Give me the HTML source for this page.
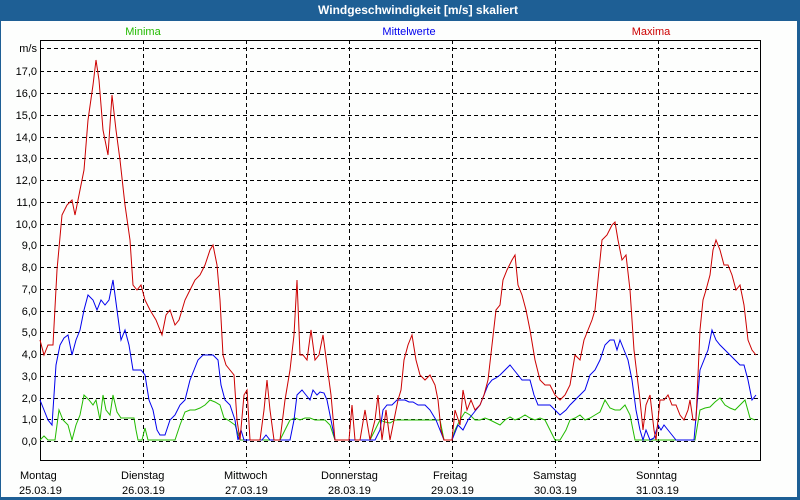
<!DOCTYPE html>
<html><head><meta charset="utf-8"><style>
html,body{margin:0;padding:0;width:800px;height:500px;overflow:hidden;background:#fdfefd}
svg{display:block}
text{font-family:"Liberation Sans",sans-serif;font-size:11px}
</style></head><body>
<svg width="800" height="500" viewBox="0 0 800 500">
<rect x="0" y="0" width="800" height="500" fill="#1e5f95"/>
<rect x="1" y="21" width="796" height="476" fill="#fdfefd"/>
<text x="418" y="14" fill="#fff" font-weight="bold" text-anchor="middle" style="font-size:12px">Windgeschwindigkeit [m/s] skaliert</text>
<text x="143" y="35" fill="#22bb00" text-anchor="middle">Minima</text>
<text x="409" y="35" fill="#0000ee" text-anchor="middle">Mittelwerte</text>
<text x="651" y="35" fill="#cc0000" text-anchor="middle">Maxima</text>
<g stroke="#000" stroke-width="1" stroke-dasharray="4,3" fill="none">
<path d="M40 48.5H760M40 71.5H760M40 93.5H760M40 115.5H760M40 137.5H760M40 158.5H760M40 180.5H760M40 202.5H760M40 224.5H760M40 245.5H760M40 267.5H760M40 289.5H760M40 311.5H760M40 332.5H760M40 354.5H760M40 376.5H760M40 398.5H760M40 419.5H760M40 441.5H760"/>
<path d="M143.5 40V468M246.5 40V468M349.5 40V468M452.5 40V468M555.5 40V468M658.5 40V468"/>
</g>
<rect x="40.5" y="40.5" width="720" height="420" fill="none" stroke="#000"/>
<g text-anchor="end" fill="#000">
<text x="37" y="52">m/s</text>
<text x="37" y="75">17,0</text><text x="37" y="97">16,0</text><text x="37" y="119">15,0</text><text x="37" y="141">14,0</text><text x="37" y="162">13,0</text><text x="37" y="184">12,0</text><text x="37" y="206">11,0</text><text x="37" y="228">10,0</text><text x="37" y="249">9,0</text><text x="37" y="271">8,0</text><text x="37" y="293">7,0</text><text x="37" y="315">6,0</text><text x="37" y="336">5,0</text><text x="37" y="358">4,0</text><text x="37" y="380">3,0</text><text x="37" y="402">2,0</text><text x="37" y="423">1,0</text><text x="37" y="445">0,0</text>
</g>
<g fill="#000">
<text x="20" y="479">Montag</text><text x="19" y="494">25.03.19</text>
<text x="121" y="479">Dienstag</text><text x="122" y="494">26.03.19</text>
<text x="224" y="479">Mittwoch</text><text x="225" y="494">27.03.19</text>
<text x="321" y="479">Donnerstag</text><text x="328" y="494">28.03.19</text>
<text x="433" y="479">Freitag</text><text x="431" y="494">29.03.19</text>
<text x="533" y="479">Samstag</text><text x="534" y="494">30.03.19</text>
<text x="636" y="479">Sonntag</text><text x="636" y="494">31.03.19</text>
</g>
<polyline fill="none" stroke="#22bb00" stroke-width="1" points="40,440 44,436 48,440 55,440 59,410 63,420 68,425 72,440 76,425 80,415 84,395 89,400 93,405 96,400 100,420 103,395 106,410 110,415 113,395 117,412 121,418 125,418 130,418 134,418 136,430 138,440 142,440 145,428 148,440 155,440 165,440 175,440 180,425 185,412 190,410 195,410 200,408 205,405 210,400 215,402 220,405 224,418 228,420 235,425 240,440 280,440 285,430 290,420 295,418 300,420 305,418 310,418 315,420 320,420 325,420 330,425 335,440 370,440 375,430 380,420 385,422 390,423 395,420 400,420 410,420 420,420 430,420 440,420 444,440 452,440 455,430 460,420 465,412 470,415 475,420 480,420 485,418 490,420 500,425 505,420 510,417 515,420 520,418 525,415 530,418 535,420 540,418 545,420 550,430 555,440 560,440 566,430 570,420 575,418 580,415 585,420 590,418 595,415 600,412 605,400 610,408 615,410 620,410 625,405 630,415 635,440 645,440 655,440 665,440 695,440 700,410 705,408 710,407 715,402 720,398 725,405 730,408 735,410 740,405 745,400 750,418 755,420"/>
<polyline fill="none" stroke="#0000ee" stroke-width="1" points="40,400 44,410 48,420 52,425 56,365 60,345 64,338 68,335 72,355 76,340 80,330 84,310 88,295 93,300 97,310 101,300 105,305 109,300 113,280 117,310 121,340 125,330 129,345 133,370 137,370 141,370 145,375 149,400 153,410 157,430 160,435 165,435 170,420 175,415 180,405 185,400 190,380 194,370 198,360 203,355 208,355 213,355 218,360 221,385 225,400 230,405 235,420 238,440 241,430 244,440 248,440 255,440 262,440 266,435 270,440 280,440 290,440 294,420 297,395 302,390 306,395 310,400 313,390 317,395 320,392 324,393 327,400 331,420 335,440 349,440 355,440 365,440 375,440 380,430 383,410 387,405 392,405 397,400 401,400 405,400 409,402 413,402 418,405 425,405 430,410 436,420 440,430 444,440 452,440 458,425 463,430 468,420 472,415 476,410 480,405 484,395 488,385 492,380 496,378 500,375 505,370 510,365 514,370 518,375 522,380 527,380 530,380 534,395 538,405 544,405 550,405 555,410 560,415 566,410 570,405 575,400 580,395 585,390 590,375 595,370 600,360 605,345 610,340 614,340 617,350 620,340 624,350 628,360 632,380 636,410 640,430 643,440 646,430 650,440 654,438 658,425 661,430 664,425 668,430 672,435 676,440 685,440 694,440 700,370 704,360 708,350 712,330 716,340 720,345 725,350 730,355 735,360 740,365 744,365 748,380 752,400 756,395"/>
<polyline fill="none" stroke="#cc0000" stroke-width="1" points="40,340 44,355 48,345 53,345 57,270 62,215 67,205 72,200 75,215 80,190 84,170 88,120 93,85 96,60 99,80 103,130 108,155 112,95 116,130 120,160 125,205 130,240 133,285 137,290 141,285 145,300 150,310 156,320 162,335 166,315 170,310 175,325 179,320 185,300 190,290 195,280 200,275 205,265 210,250 213,245 217,265 220,300 223,355 226,365 230,370 234,375 237,420 240,440 244,395 247,390 250,440 255,440 260,440 264,410 267,380 270,410 274,440 280,440 285,400 290,370 294,335 297,280 300,355 303,355 307,360 311,330 315,360 319,355 323,335 327,365 331,395 335,440 340,440 345,440 349,440 352,405 355,440 360,440 365,410 370,440 375,420 378,395 382,440 386,410 390,440 394,420 398,400 401,390 404,360 408,345 412,335 416,360 420,375 425,380 430,375 435,385 438,400 441,430 444,440 448,440 452,440 455,410 460,425 463,390 467,410 471,400 475,410 480,405 484,395 488,380 492,345 496,310 500,305 503,280 507,270 512,260 515,255 518,285 522,295 526,310 530,330 535,360 540,380 545,385 550,385 555,395 560,400 565,395 570,385 575,355 580,360 584,340 588,330 592,320 595,310 598,280 602,240 607,235 612,225 615,222 618,240 622,260 626,255 630,290 634,350 637,375 640,400 643,430 646,405 650,395 654,430 656,440 660,400 664,400 668,395 672,405 676,405 680,415 684,420 688,410 690,400 693,420 696,420 700,330 703,300 706,290 710,275 713,250 716,240 720,250 724,265 728,265 732,275 736,290 740,285 744,305 748,340 752,350 756,355"/>
</svg>
</body></html>
